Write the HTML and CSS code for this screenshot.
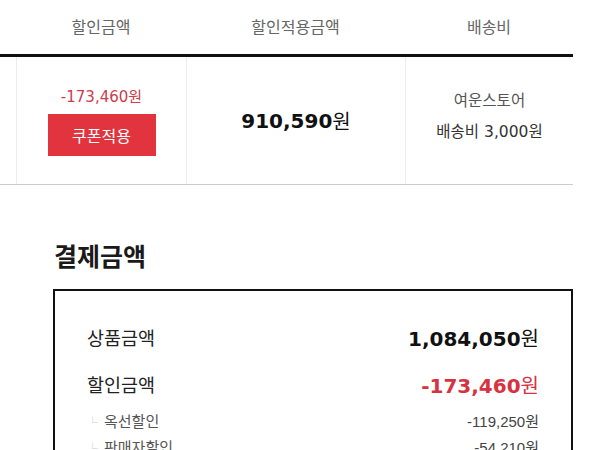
FILE: index.html
```html
<!DOCTYPE html>
<html lang="ko">
<head>
<meta charset="utf-8">
<link rel="stylesheet" href="styles.css">
</head>
<body>
<div class="order-table">
  <div class="thead">
    <div class="th stub"></div>
    <div class="th">할인금액</div>
    <div class="th">할인적용금액</div>
    <div class="th">배송비</div>
  </div>
  <div class="tbody">
    <div class="td stub"></div>
    <div class="td discount">
      <div class="disc-price">-173,460<span class="won">원</span></div>
      <button class="coupon-btn">쿠폰적용</button>
    </div>
    <div class="td final">910,590<span class="won">원</span></div>
    <div class="td ship">
      <div class="ship-store">여운스토어</div>
      <div class="ship-fee">배송비 3,000원</div>
    </div>
  </div>
</div>

<section class="pay">
  <h2 class="pay-title">결제금액</h2>
  <div class="pay-box">
    <div class="pay-row main">
      <span class="pay-label">상품금액</span>
      <span class="pay-value">1,084,050<span class="won">원</span></span>
    </div>
    <div class="pay-row main red">
      <span class="pay-label">할인금액</span>
      <span class="pay-value">-173,460<span class="won">원</span></span>
    </div>
    <div class="pay-row sub first">
      <span class="pay-label"><span class="branch">└</span>옥선할인</span>
      <span class="pay-value">-119,250원</span>
    </div>
    <div class="pay-row sub">
      <span class="pay-label"><span class="branch">└</span>판매자할인</span>
      <span class="pay-value">-54,210원</span>
    </div>
  </div>
</section>
</body>
</html>
```
FILE: styles.css
```css
* { box-sizing: border-box; }
html, body { margin: 0; padding: 0; background: #fff; }
body {
  font-family: "DejaVu Sans", "Noto Sans CJK KR", sans-serif;
  color: #222;
  width: 600px;
  overflow: hidden;
}
.order-table { width: 573px; }
.thead, .tbody {
  display: grid;
  grid-template-columns: 16px 170px 219px 168px;
}
.thead {
  height: 57px;
  border-bottom: 3px solid #111;
}
.th {
  display: flex;
  align-items: center;
  justify-content: center;
  font-size: 16px;
  color: #666;
  padding-bottom: 2px;
}
.tbody {
  height: 128px;
  border-bottom: 1px solid #ccc;
}
.td {
  display: flex;
  flex-direction: column;
  align-items: center;
  justify-content: center;
  border-left: 1px solid #ececec;
}
.td.stub { border-left: none; }
.won { font-weight: normal; font-family: "Noto Sans CJK KR", sans-serif; }
.disc-price {
  font-size: 15px;
  color: #c9404d;
}
.disc-price .won { font-size: 15px; }
.coupon-btn {
  margin-top: 8px;
  width: 108px;
  height: 42px;
  flex-shrink: 0;
  border: none;
  background: #e1343e;
  color: #fff;
  font-family: "Noto Sans CJK KR", sans-serif;
  font-size: 16px;
  padding: 0;
}
.final {
  font-size: 20px;
  font-weight: bold;
  color: #111;
  flex-direction: row;
}
.final .won { font-size: 20px; }
.ship { font-size: 15.5px; color: #555; padding-bottom: 9px; }
.ship-store { line-height: 20px; }
.ship-fee { line-height: 20px; margin-top: 11px; color: #333; }

.pay { margin-left: 53px; width: 520px; }
.pay-title {
  margin: 0;
  padding: 53px 0 0 1px;
  font-family: "Noto Sans CJK KR", sans-serif;
  font-size: 25px;
  font-weight: bold;
  line-height: 34px;
  color: #1a1a1a;
  height: 104px;
}
.pay-box {
  border: 2px solid #111;
  border-bottom: none;
  padding: 32px 32px 0 32px;
  height: 200px;
}
.pay-row {
  display: flex;
  justify-content: space-between;
  align-items: center;
}
.pay-row.main { height: 28px; margin-bottom: 19px; }
.pay-row.main .pay-label {
  font-family: "Noto Sans CJK KR", sans-serif;
  font-size: 18.5px;
  color: #222;
}
.pay-row.main .pay-value {
  font-size: 20px;
  font-weight: bold;
  color: #111;
}
.pay-row.main.red .pay-value { color: #d7323f; }
.pay-row.main .won { font-size: 20px; }
.pay-row.sub { height: 26px; }
.pay-row.sub.first { margin-top: -10px; }
.pay-row.sub .pay-label {
  font-family: "Noto Sans CJK KR", sans-serif;
  font-size: 15px;
  color: #555;
}
.branch {
  color: #ccc;
  font-size: 11px;
  margin-right: 6px;
}
.pay-row.sub .pay-value {
  font-family: "Liberation Sans", "Noto Sans CJK KR", sans-serif;
  font-size: 15px;
  color: #444;
}
```
